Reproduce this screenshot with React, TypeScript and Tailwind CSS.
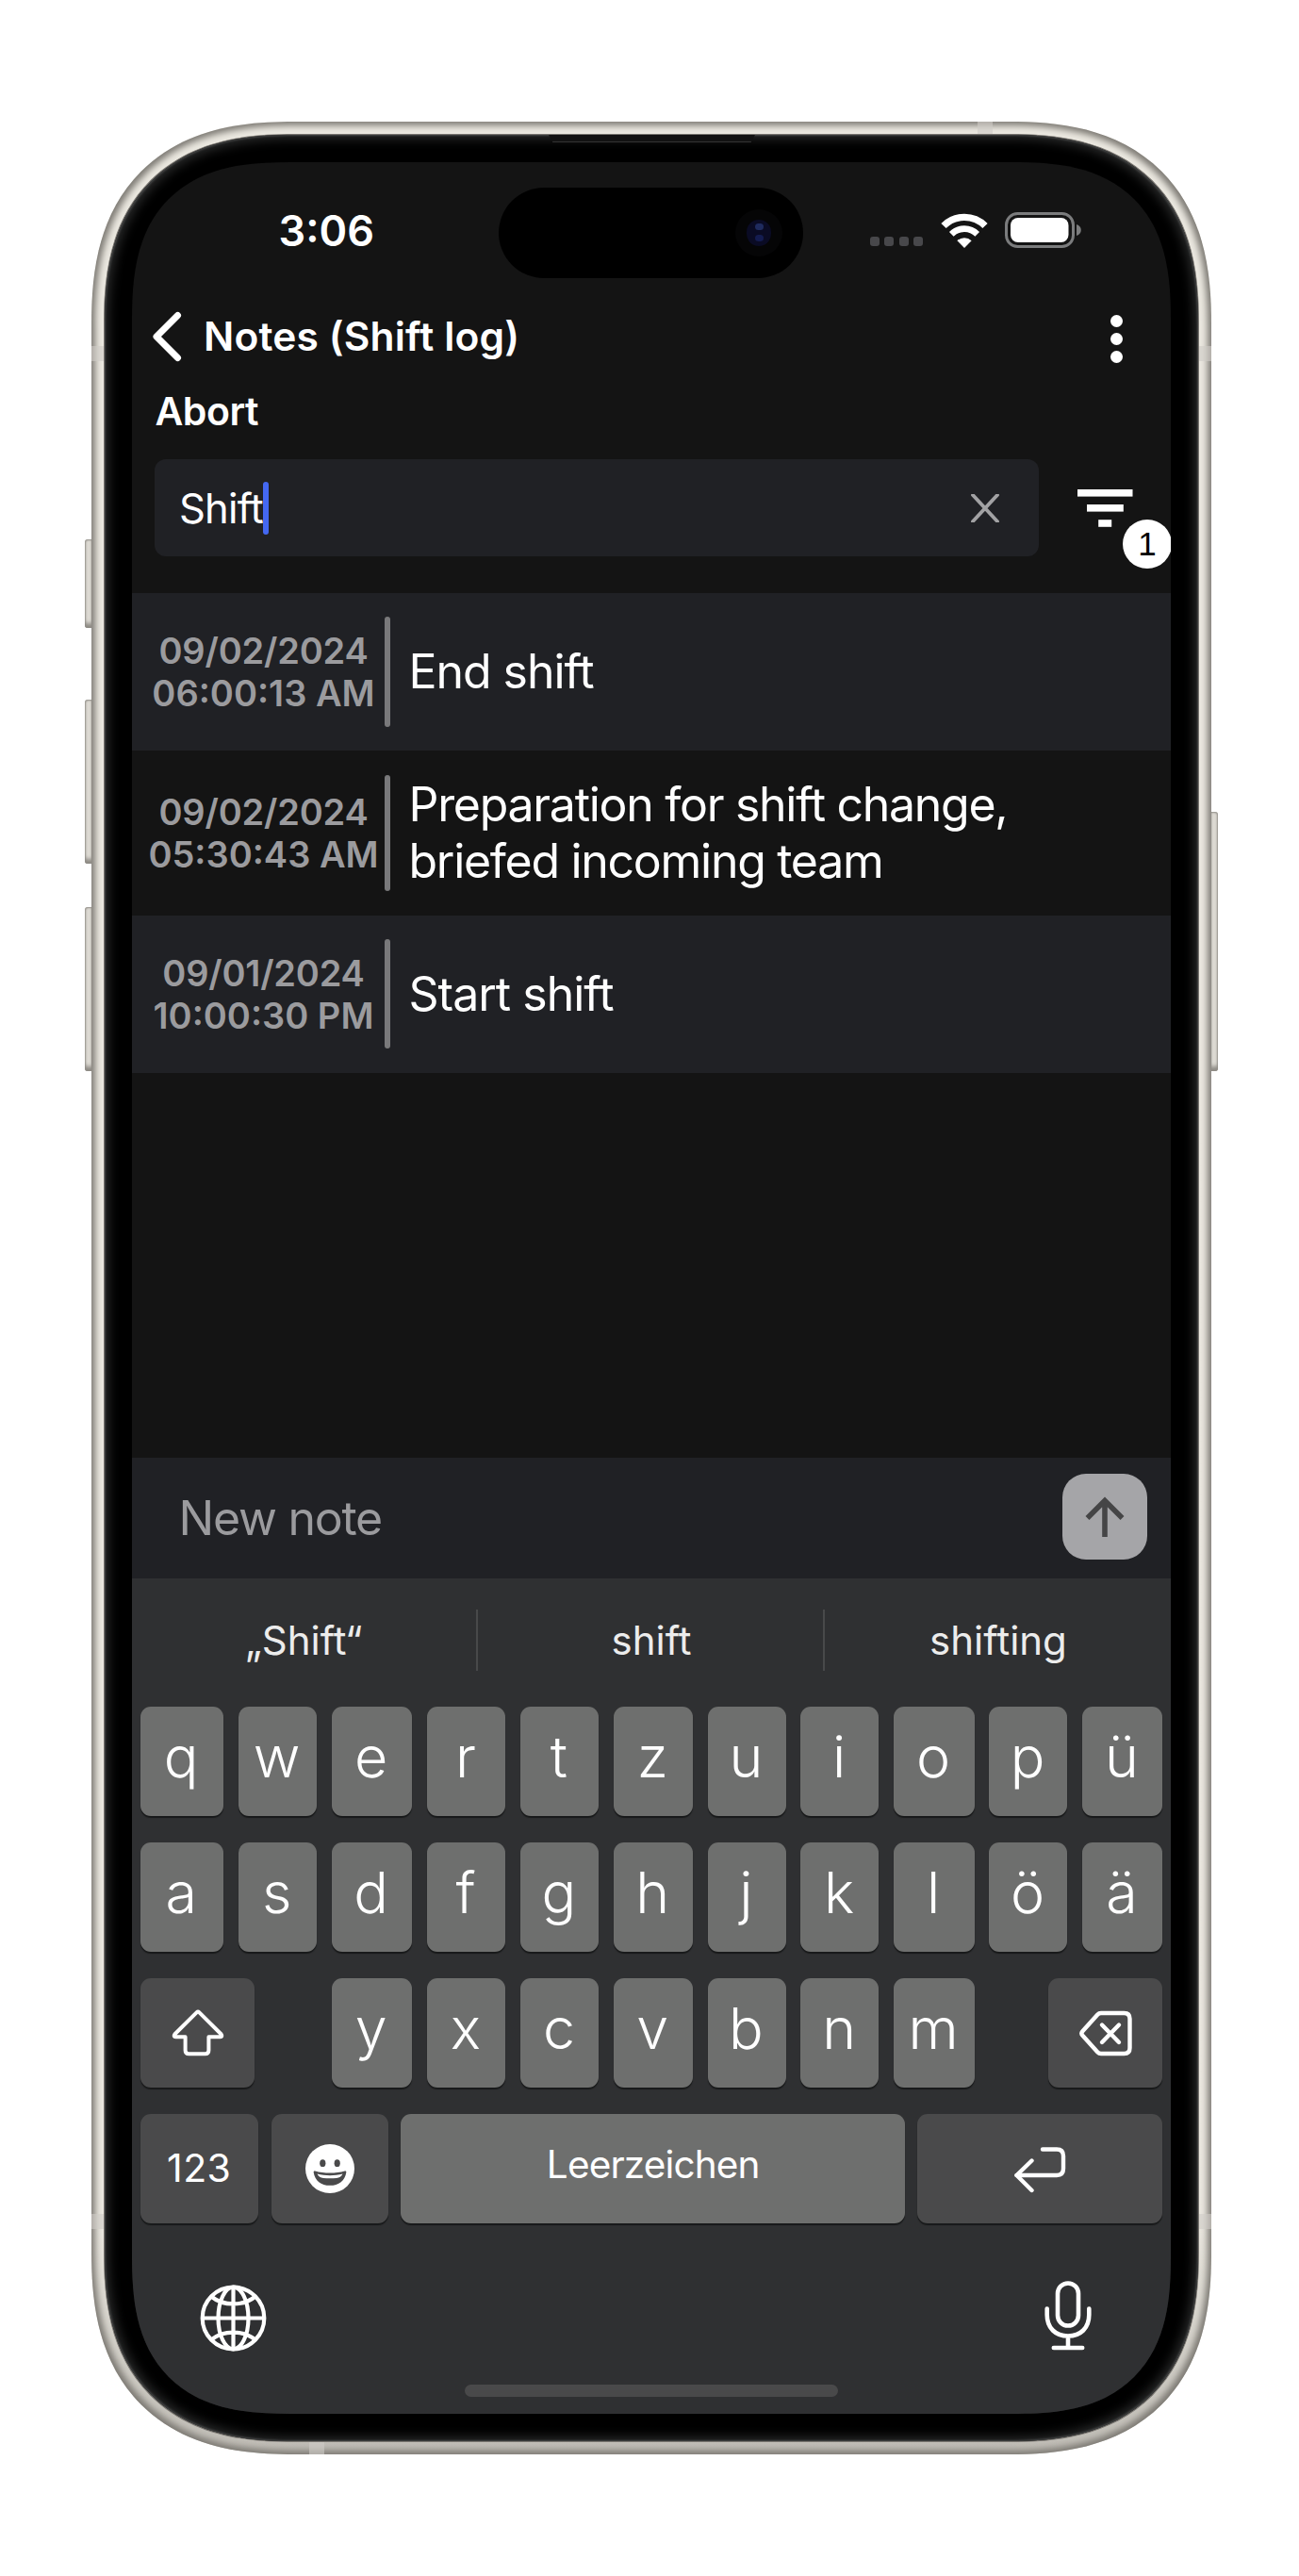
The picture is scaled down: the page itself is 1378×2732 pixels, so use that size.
import type { ReactNode } from "react";

const NOTES = [
  { date: "09/02/2024", time: "06:00:13 AM", text: ["End shift"], row: "h-[167.5px] bg-[#202125]", track: "tracking-[-1.050px]" },
  {
    date: "09/02/2024",
    time: "05:30:43 AM",
    text: ["Preparation for shift change,", "briefed incoming team"],
    row: "h-[174.5px]",
    track: "tracking-[-1.290px]",
  },
  { date: "09/01/2024", time: "10:00:30 PM", text: ["Start shift"], row: "h-[167px] bg-[#202125]", track: "tracking-[-1px]" },
];

const KEY_GRID =
  "grid h-[116px] justify-between grid-cols-[88.5px_83px_85.5px_83.5px_83px_84px_83px_83px_85.5px_83px_85px]";

function Key({ dark, className = "", children }: { dark?: boolean; className?: string; children: ReactNode }) {
  return (
    <div
      className={`flex h-[116px] items-center justify-center rounded-[11px] shadow-[0_2px_1px_#18191a] ${
        dark ? "bg-[#4a4a4b]" : "bg-[#6e6f6e]"
      } ${className}`}
    >
      {children}
    </div>
  );
}

function LetterKey({ letter, className = "" }: { letter: string; className?: string }) {
  return (
    <Key className={className}>
      <span className="pr-[1.500px] pb-[9px] text-[61px] leading-none font-[350]">{letter}</span>
    </Key>
  );
}

function StatusBar() {
  return (
    <div className="flex h-[145px] shrink-0 items-center pr-[95px] pl-[155.5px]">
      <span className="text-[45px] leading-none font-[590]">3:06</span>
      <div className="ml-auto flex items-center">
        <div className="mt-[23px] mr-[1px] flex gap-[5.4px]">
          {[0, 1, 2, 3].map((i) => (
            <span key={i} className="size-[10px] rounded-[3px] bg-[#48484b]" />
          ))}
        </div>
        <svg className="ml-[18px]" width="50" height="38" viewBox="0 0 50 38" fill="none">
          <path d="M3 13.5A31 31 0 0 1 47 13.5" stroke="#fff" strokeWidth="7.4" />
          <path d="M11.3 22.3A19.4 19.4 0 0 1 38.7 22.3" stroke="#fff" strokeWidth="6.6" />
          <path d="M25 37L17.4 29.2a11 11 0 0 1 15.2 0z" fill="#fff" />
        </svg>
        <svg className="-mt-[1px] ml-[18px]" width="81" height="38" viewBox="0 0 81 38" fill="none">
          <rect x="1.5" y="1.5" width="71" height="35" rx="12" stroke="#7b7c7d" strokeWidth="3" />
          <rect x="6" y="6" width="61.5" height="26" rx="8" fill="#fff" />
          <path d="M76 13c3.3 1.3 4.8 3.3 4.8 6s-1.5 4.7-4.8 6z" fill="#7b7c7d" />
        </svg>
      </div>
    </div>
  );
}

function Header() {
  return (
    <div className="flex h-[79px] shrink-0 items-center pr-[51px] pl-[20.500px]">
      <svg width="32" height="54" viewBox="0 0 32 54" fill="none">
        <path d="M27.5 4.5L5 27l22.5 22.5" stroke="#fff" strokeWidth="7" strokeLinecap="round" strokeLinejoin="round" />
      </svg>
      <h1 className="mt-[1px] ml-[23.500px] text-[42.500px] leading-none font-[590] tracking-[0.150px]">Notes (Shift log)</h1>
      <div className="mt-[6px] ml-auto flex flex-col gap-[6px]">
        {[0, 1, 2].map((i) => (
          <span key={i} className="size-[13.300px] rounded-full bg-white" />
        ))}
      </div>
    </div>
  );
}

function SearchRow() {
  return (
    <div className="mt-[10px] mb-[38.500px] flex h-[103px] shrink-0 items-center pl-[24px]">
      <div className="flex h-full w-[938px] items-center rounded-[12px] bg-[#202125] pr-[42.500px] pl-[26px]">
        <span className="mt-[1.500px] text-[43.500px] leading-none tracking-[-0.800px]">Shift</span>
        <span className="h-[56px] w-[5.500px] rounded-full bg-[#4468f2]" />
        <svg className="ml-auto" width="30" height="30" viewBox="0 0 30 30" fill="none">
          <path d="M2 1l26 28M28 1L2 29" stroke="#a2a2a4" strokeWidth="3.8" strokeLinecap="round" />
        </svg>
      </div>
      <div className="relative ml-[41px] h-[40px] w-[59px]">
        <svg width="59" height="40" viewBox="0 0 59 40" fill="#fff">
          <rect x="0" y="0" width="58.5" height="7.6" />
          <rect x="10" y="16" width="38.8" height="7.6" />
          <rect x="22.2" y="32.2" width="14" height="7.6" />
        </svg>
        <span className="absolute top-[32.500px] left-[48px] flex size-[52px] items-center justify-center rounded-full bg-white pb-[1px] font-['Liberation_Sans',Arial,sans-serif] text-[35px] leading-none text-black">
          1
        </span>
      </div>
    </div>
  );
}

function NoteList() {
  return (
    <ul className="flex-1">
      {NOTES.map((note) => (
        <li key={note.time} className={`flex items-center ${note.row}`}>
          <div className="mt-[2px] flex w-[268px] flex-col items-center pl-[11px] text-[38px] leading-[45px] font-[560] whitespace-nowrap text-[#9b9b9e]">
            <span className="tracking-[-0.200px]">{note.date}</span>
            <span>{note.time}</span>
          </div>
          <span className="my-[25.500px] w-[5.500px] self-stretch rounded-full bg-[#79797b]" />
          <p className={`ml-[20px] text-[50px] leading-[60.600px] whitespace-nowrap ${note.track}`}>
            {note.text.map((line) => (
              <span key={line} className="block">
                {line}
              </span>
            ))}
          </p>
        </li>
      ))}
    </ul>
  );
}

function Composer() {
  return (
    <div className="flex h-[128.500px] shrink-0 items-center justify-between bg-[#202125] pr-[25px] pl-[49.500px]">
      <span className="text-[50px] leading-none tracking-[-1.250px] text-[#9b9b9e]">New note</span>
      <button className="mb-[2px] flex h-[91px] w-[90px] items-center justify-center rounded-[25px] bg-[#a5a5a8]">
        <svg width="42" height="44" viewBox="0 0 42 44" fill="none">
          <path d="M21 43V5M2.5 23L21 4.5 39.5 23" stroke="#454546" strokeWidth="5.6" />
        </svg>
      </button>
    </div>
  );
}

function Keyboard() {
  return (
    <div className="flex h-[886px] shrink-0 flex-col bg-[#2f3032]">
      <div className="flex h-[131.500px] items-center text-[42px] leading-none text-[#ececec]">
        <span className="w-[364.500px] text-center">„Shift“</span>
        <span className="h-[65px] w-[2px] bg-[#48494a]" />
        <span className="w-[366px] pl-[3px] text-center">shift</span>
        <span className="h-[65px] w-[2px] bg-[#48494a]" />
        <span className="flex-1 pl-[1.500px] text-center">shifting</span>
      </div>
      <div className="mx-[8.700px] mt-[4px] flex flex-col gap-[28px]">
        <div className={KEY_GRID}>
          {"qwertzuiopü".split("").map((l) => (
            <LetterKey key={l} letter={l} />
          ))}
        </div>
        <div className={KEY_GRID}>
          {"asdfghjklöä".split("").map((l) => (
            <LetterKey key={l} letter={l} />
          ))}
        </div>
        <div className={KEY_GRID}>
          <Key dark className="col-span-2 w-[121px]">
            <svg className="mt-[1px] ml-[1px]" width="56" height="50" viewBox="0 0 56 50" fill="none">
              <path
                d="M26.8 3.1L3.3 26.5c-1.3 1.5-.6 2.7 1 2.7H14.6V43.5c0 2.6 1.2 3.8 3.8 3.8h17.2c2.6 0 3.8-1.2 3.8-3.8V29.2H51.7c1.6 0 2.3-1.2 1-2.7L29.2 3.1c-.8-.8-1.6-.8-2.4 0z"
                stroke="#fff"
                strokeWidth="4"
                strokeLinejoin="round"
              />
            </svg>
          </Key>
          {"yxcvbnm".split("").map((l) => (
            <LetterKey key={l} letter={l} />
          ))}
          <Key dark className="col-span-2 w-[121px] justify-self-end">
            <svg className="mt-[2px] ml-[1px]" width="56" height="50" viewBox="0 0 56 50" fill="none" stroke="#fff" strokeWidth="4.4">
              <path d="M23 3H47.5c4 0 6 2 6 6V40c0 4-2 6-6 6H23c-1.5 0-2.6-.4-3.600-1.500L3.400 26.800c-1.400-1.500-1.400-3 0-4.600L19.400 4.500C20.400 3.400 21.500 3 23 3z" strokeLinejoin="round" />
              <path d="M24 15.5L42 34M42 15.5L24 34" strokeLinecap="round" />
            </svg>
          </Key>
        </div>
        <div className="flex h-[116px] justify-between">
          <Key dark className="w-[125px]">
            <span className="text-[41px] leading-none tracking-[0.400px]">123</span>
          </Key>
          <Key dark className="ml-[1.500px] w-[124px]">
            <svg width="52" height="52" viewBox="0 0 52 52">
              <circle cx="26" cy="26" r="26" fill="#fff" />
              <ellipse cx="18.3" cy="20.2" rx="3.1" ry="3.9" fill="#4a4a4b" />
              <ellipse cx="33.7" cy="20.2" rx="3.1" ry="3.9" fill="#4a4a4b" />
              <path d="M10.200 28.500c-1.200-.4-1.700.3-1.500 1.400C10 38.500 16.600 43.800 26 43.800s16-5.300 17.300-13.900c.2-1.100-.3-1.800-1.500-1.400-9.800 2.700-21.800 2.700-31.600 0z" fill="#4a4a4b" />
              <path d="M12.500 31.500c8.600 2.300 18.400 2.300 27 0-1.500 3-3.500 4-6.500 4.400-4.700.6-9.300.6-14 0-3-.4-5-1.400-6.500-4.400z" fill="#fff" />
            </svg>
          </Key>
          <Key className="w-[535px]">
            <span className="pb-[6px] text-[40.500px] leading-none tracking-[-0.850px]">Leerzeichen</span>
          </Key>
          <Key dark className="w-[260px]">
            <svg className="mt-[2px]" width="56" height="50" viewBox="0 0 56 50" fill="none" stroke="#fff" strokeWidth="4.4" strokeLinecap="round" strokeLinejoin="round">
              <path d="M31 3.500H46c4.800 0 7 2.200 7 7V24c0 4.800-2.200 7-7 7H3.500" />
              <path d="M19.500 15.500L3.500 31l16 16" />
            </svg>
          </Key>
        </div>
      </div>
      <div className="mt-[62px] flex h-[73px] items-center justify-between pr-[84px] pl-[72px]">
        <svg className="mt-[5px]" width="71" height="71" viewBox="0 0 71 71" fill="none" stroke="#fff" strokeWidth="4.2">
          <circle cx="35.5" cy="35.5" r="32.8" />
          <ellipse cx="35.5" cy="35.5" rx="16" ry="32.8" />
          <path d="M35.500 2.500v66M2.500 35.500h66M12 12.500c13 10.600 34 10.600 47 0M12 58.500c13-10.600 34-10.600 47 0" />
        </svg>
        <svg width="50" height="74" viewBox="0 0 50 74" fill="none" stroke="#fff" strokeWidth="4.6" strokeLinecap="round">
          <rect x="14" y="2.5" width="22" height="45" rx="11" />
          <path d="M2.700 29.500V36c0 14 9 22.500 22.300 22.500S47.300 50 47.300 36V29.500M25 58.500V71M9.800 71h30.400" />
        </svg>
      </div>
      <div className="mx-auto mt-[36px] h-[13px] w-[396px] rounded-full bg-[#49494a]" />
    </div>
  );
}

function SideButton({ className }: { className: string }) {
  return (
    <span
      className={`absolute w-[8px] bg-[#dcd9d2] shadow-[inset_0_0_2px_1px_#8f8c86,inset_0_-10px_4px_-5px_#8f8c86] ${className}`}
    />
  );
}

function Band({ className }: { className: string }) {
  return <span className={`absolute bg-[#cfccc6]/60 ${className}`} />;
}

export default function App() {
  return (
    <div className="h-[2732px] w-[1378px] bg-white pt-[129px] pl-[97px] font-['Inter',sans-serif] text-white">
      <div className="relative h-[2474px] w-[1188px]">
        <SideButton className="top-[443px] -left-[7px] h-[94px] rounded-l-[3px]" />
        <SideButton className="top-[613px] -left-[7px] h-[174px] rounded-l-[3px]" />
        <SideButton className="top-[833px] -left-[7px] h-[174px] rounded-l-[3px]" />
        <SideButton className="top-[732px] -right-[7px] h-[275px] rounded-r-[3px]" />
        <div className="relative h-full w-full rounded-[182px] bg-linear-to-b from-[#ebe8e0] from-90% to-[#bebbb4] p-[14px] shadow-[inset_0_0_7px_4px_#7d7a74] supports-[corner-shape:round]:rounded-[215px] supports-[corner-shape:round]:[corner-shape:superellipse(1.3)]">
          <Band className="top-0 left-[940px] h-[14px] w-[16px]" />
          <Band className="bottom-0 left-[231px] h-[14px] w-[16px]" />
          <Band className="top-[238px] left-0 h-[16px] w-[14px]" />
          <Band className="top-[238px] right-0 h-[16px] w-[14px]" />
          <Band className="top-[2219px] left-0 h-[16px] w-[14px]" />
          <Band className="top-[2219px] right-0 h-[16px] w-[14px]" />
          <div className="relative h-full w-full rounded-[168px] bg-black px-[29px] py-[29px] shadow-[0_0_0_1px_#77746f,inset_0_0_2px_1px_#454646,inset_0_0_12px_4px_#2a2b2b] supports-[corner-shape:round]:rounded-[201px] supports-[corner-shape:round]:[corner-shape:superellipse(1.3)]">
            <span className="absolute top-0 left-[471px] h-[8px] w-[219px] bg-[#121212] shadow-[inset_0_-1px_0_#333] [clip-path:polygon(0_0,100%_0,98%_100%,2%_100%)]" />
            <div className="relative flex h-full w-full flex-col overflow-hidden rounded-[138px] bg-[#141414] supports-[corner-shape:round]:rounded-[168px] supports-[corner-shape:round]:[corner-shape:superellipse(1.39)]">
              <div className="absolute top-[26.500px] left-[389px] flex h-[96px] w-[323px] items-center justify-end rounded-full bg-black pr-[22px]">
                <span className="flex size-[50px] items-center justify-center rounded-full bg-[#050506]">
                  <span className="flex h-[28px] w-[26px] flex-col items-center justify-center gap-[5px] rounded-full bg-[#0a0b24]">
                    <span className="h-[7px] w-[9px] rounded-full bg-[#1f2b5e]" />
                    <span className="h-[7px] w-[9px] rounded-full bg-[#141c50]" />
                  </span>
                </span>
              </div>
              <StatusBar />
              <Header />
              <div className="flex h-[81px] shrink-0 items-center pl-[24.500px] text-[41px] leading-none font-[590] tracking-[-0.500px]">
                Abort
              </div>
              <SearchRow />
              <NoteList />
              <Composer />
              <Keyboard />
            </div>
          </div>
        </div>
      </div>
    </div>
  );
}
